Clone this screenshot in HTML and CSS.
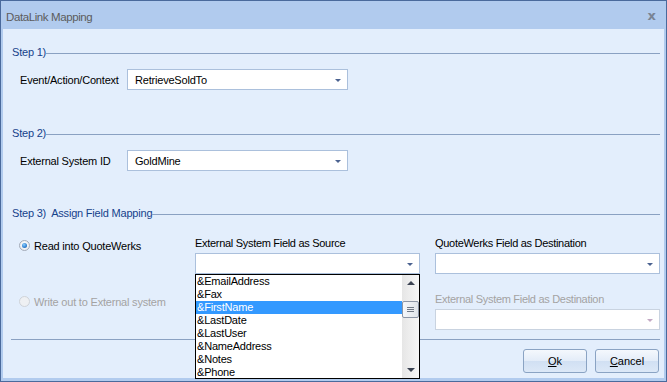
FILE: index.html
```html
<!DOCTYPE html>
<html lang="en">
<head>
    <meta charset="UTF-8">
    <title>DataLink Mapping</title>
    <link rel="stylesheet" href="styles.css">
</head>
<body>

    <div class="window">
        <div class="titlebar">
            <span class="title">DataLink Mapping</span>
            <span class="close">x</span>
        </div>

        <div class="content">
            <div class="group-head step1"><span>Step 1)</span><div class="rule"></div></div>
            <div class="field-row">
                <label class="field-label">Event/Action/Context</label>
                <div class="combo"><span>RetrieveSoldTo</span><i class="arrow"></i></div>
            </div>

            <div class="group-head step2"><span>Step 2)</span><div class="rule"></div></div>
            <div class="field-row">
                <label class="field-label">External System ID</label>
                <div class="combo"><span>GoldMine</span><i class="arrow"></i></div>
            </div>

            <div class="group-head step3"><span>Step 3)&nbsp; Assign Field Mapping</span><div class="rule"></div></div>

            <div class="mapping">
                <div class="col-radios">
                    <div class="radio-row">
                        <span class="radio checked"></span>
                        <span>Read into QuoteWerks</span>
                    </div>
                    <div class="radio-row disabled">
                        <span class="radio"></span>
                        <span>Write out to External system</span>
                    </div>
                </div>

                <div class="col-field">
                    <div class="col-label">External System Field as Source</div>
                    <div class="combo-wrap">
                        <div class="combo wide"><span></span><i class="arrow"></i></div>
                        <div class="droplist">
                            <div class="items">
                                <div class="item">&amp;EmailAddress</div>
                                <div class="item">&amp;Fax</div>
                                <div class="item selected">&amp;FirstName</div>
                                <div class="item">&amp;LastDate</div>
                                <div class="item">&amp;LastUser</div>
                                <div class="item">&amp;NameAddress</div>
                                <div class="item">&amp;Notes</div>
                                <div class="item">&amp;Phone</div>
                            </div>
                            <div class="scrollbar">
                                <div class="sb-btn"><i class="tri-up"></i></div>
                                <div class="sb-track"><div class="thumb"><b></b><b></b><b></b></div></div>
                                <div class="sb-btn"><i class="tri-down"></i></div>
                            </div>
                        </div>
                    </div>
                </div>

                <div class="col-field right">
                    <div class="col-label">QuoteWerks Field as Destination</div>
                    <div class="combo wide"><span></span><i class="arrow"></i></div>
                    <div class="col-label disabled second">External System Field as Destination</div>
                    <div class="combo wide off"><span></span><i class="arrow"></i></div>
                </div>
            </div>

            <div class="separator"></div>

            <div class="buttons">
                <button type="button"><u>O</u>k</button>
                <button type="button"><u>C</u>ancel</button>
            </div>
        </div>
    </div>

</body>
</html>
```

FILE: styles.css
```css
body {
    margin: 0;
    font-family: "Liberation Sans", Arial, sans-serif;
    font-size: 11px;
    letter-spacing: -0.2px;
    color: #000;
}

.window {
    width: 667px;
    height: 382px;
    box-sizing: border-box;
    border: 1px solid #4a6a9c;
    background: #b1cbee;
    display: flex;
    flex-direction: column;
}

.titlebar {
    height: 28px;
    display: flex;
    align-items: center;
    justify-content: space-between;
    padding: 0 10px 0 5px;
}

.title {
    color: #5c5c5c;
    font-size: 11.5px;
    letter-spacing: -0.4px;
    padding-top: 3px;
}

.close {
    color: #7a8494;
    font-weight: bold;
    font-size: 13px;
    font-family: "DejaVu Sans", sans-serif;
    letter-spacing: 0;
}

.content {
    flex: 1;
    margin: 0 2px 3px 2px;
    background: #e3eefc;
    padding: 0 4px 0 9px;
    display: flex;
    flex-direction: column;
}

/* group headers */
.group-head {
    display: flex;
    align-items: center;
    height: 13px;
    line-height: 13px;
    color: #15428b;
}

.group-head .rule {
    flex: 1;
    height: 1px;
    background: #8aa1c2;
    margin-top: 1px;
}

.step1 { margin-top: 17px; }
.step2 { margin-top: 37px; }
.step3 { margin-top: 36px; }

.field-row {
    display: flex;
    align-items: center;
    margin-top: 10px;
    height: 21px;
    padding-left: 8px;
}

.field-label {
    width: 107px;
}

/* combo boxes */
.combo {
    width: 221px;
    height: 21px;
    box-sizing: border-box;
    border: 1px solid #abc0dc;
    background: #fff;
    display: flex;
    align-items: center;
    justify-content: space-between;
    padding: 0 6px 0 7px;
}

.combo.wide {
    width: 225px;
}

.arrow {
    width: 0;
    height: 0;
    border-left: 3px solid transparent;
    border-right: 3px solid transparent;
    border-top: 3px solid #4b6290;
    margin-top: 1px;
}

.combo.off {
    border-color: #c9d3e0;
}

.combo.off .arrow {
    border-top-color: #c3a9c4;
}

/* step 3 */
.mapping {
    display: flex;
    margin-top: 17px;
}

.col-radios {
    width: 176px;
    padding-left: 7px;
    display: flex;
    flex-direction: column;
}

.radio-row {
    display: flex;
    align-items: center;
    height: 13px;
    margin-top: 2px;
}

.radio-row.disabled {
    margin-top: 43px;
    color: #a3a3a3;
}

.radio {
    width: 11px;
    height: 11px;
    border-radius: 50%;
    border: 1px solid #a3abb8;
    background: radial-gradient(circle at 50% 40%, #ffffff 0%, #e4e6ea 100%);
    margin-right: 4px;
    box-sizing: border-box;
    display: flex;
    align-items: center;
    justify-content: center;
}

.radio-row.disabled .radio {
    border-color: #cfd3d9;
    background: #eef0f3;
}

.radio.checked::after {
    content: "";
    width: 5px;
    height: 5px;
    border-radius: 50%;
    background: radial-gradient(circle at 40% 35%, #8fd0ff 0%, #2f7fd0 60%, #1f4f8f 100%);
}

.col-field {
    width: 225px;
    display: flex;
    flex-direction: column;
}

.col-field.right {
    margin-left: 15px;
}

.col-label {
    height: 13px;
    line-height: 13px;
    margin-bottom: 3px;
    letter-spacing: -0.3px;
}

.col-label.disabled {
    color: #a3a3a3;
}

.col-label.second {
    margin-top: 19px;
}

/* open dropdown list */
.combo-wrap {
    position: relative;
}

.droplist {
    position: absolute;
    top: 100%;
    left: 0;
    width: 225px;
    height: 105px;
    box-sizing: border-box;
    border: 1px solid #000;
    background: #fff;
    display: flex;
    z-index: 2;
}

.items {
    flex: 1;
}

.item {
    height: 13px;
    line-height: 13px;
    padding-left: 1px;
}

.item.selected {
    background: #3399ff;
    color: #fff;
}

.scrollbar {
    width: 17px;
    display: flex;
    flex-direction: column;
    background: linear-gradient(to right, #e6e6e6, #f7f7f7);
}

.sb-btn {
    height: 16px;
    display: flex;
    align-items: center;
    justify-content: center;
}

.tri-up, .tri-down {
    width: 0;
    height: 0;
    border-left: 4px solid transparent;
    border-right: 4px solid transparent;
}

.tri-up { border-bottom: 4px solid #3b4352; }
.tri-down { border-top: 4px solid #3b4352; }

.sb-track {
    flex: 1;
    padding-top: 10px;
}

.thumb {
    height: 17px;
    box-sizing: border-box;
    border: 1px solid #8b95a6;
    border-radius: 2px;
    background: linear-gradient(to right, #f5f7fa, #dfe4ea);
    display: flex;
    flex-direction: column;
    align-items: center;
    justify-content: center;
    gap: 1px;
}

.thumb b {
    width: 7px;
    height: 1px;
    background: #6f7885;
}

.separator {
    height: 1px;
    background: #8aa1c2;
    margin: 9px 0 0 -1px;
}

.buttons {
    display: flex;
    justify-content: flex-end;
    gap: 8px;
    margin-top: 9px;
    padding-right: 1px;
}

button {
    width: 64px;
    height: 24px;
    border: 1px solid #8aa3c3;
    border-radius: 3px;
    background: linear-gradient(to bottom, #f4f8fd 0%, #e3ecf8 50%, #d1e0f3 51%, #dce8f7 100%);
    font-family: "Liberation Sans", Arial, sans-serif;
    font-size: 11px;
    color: #000;
    padding: 0;
}
```
